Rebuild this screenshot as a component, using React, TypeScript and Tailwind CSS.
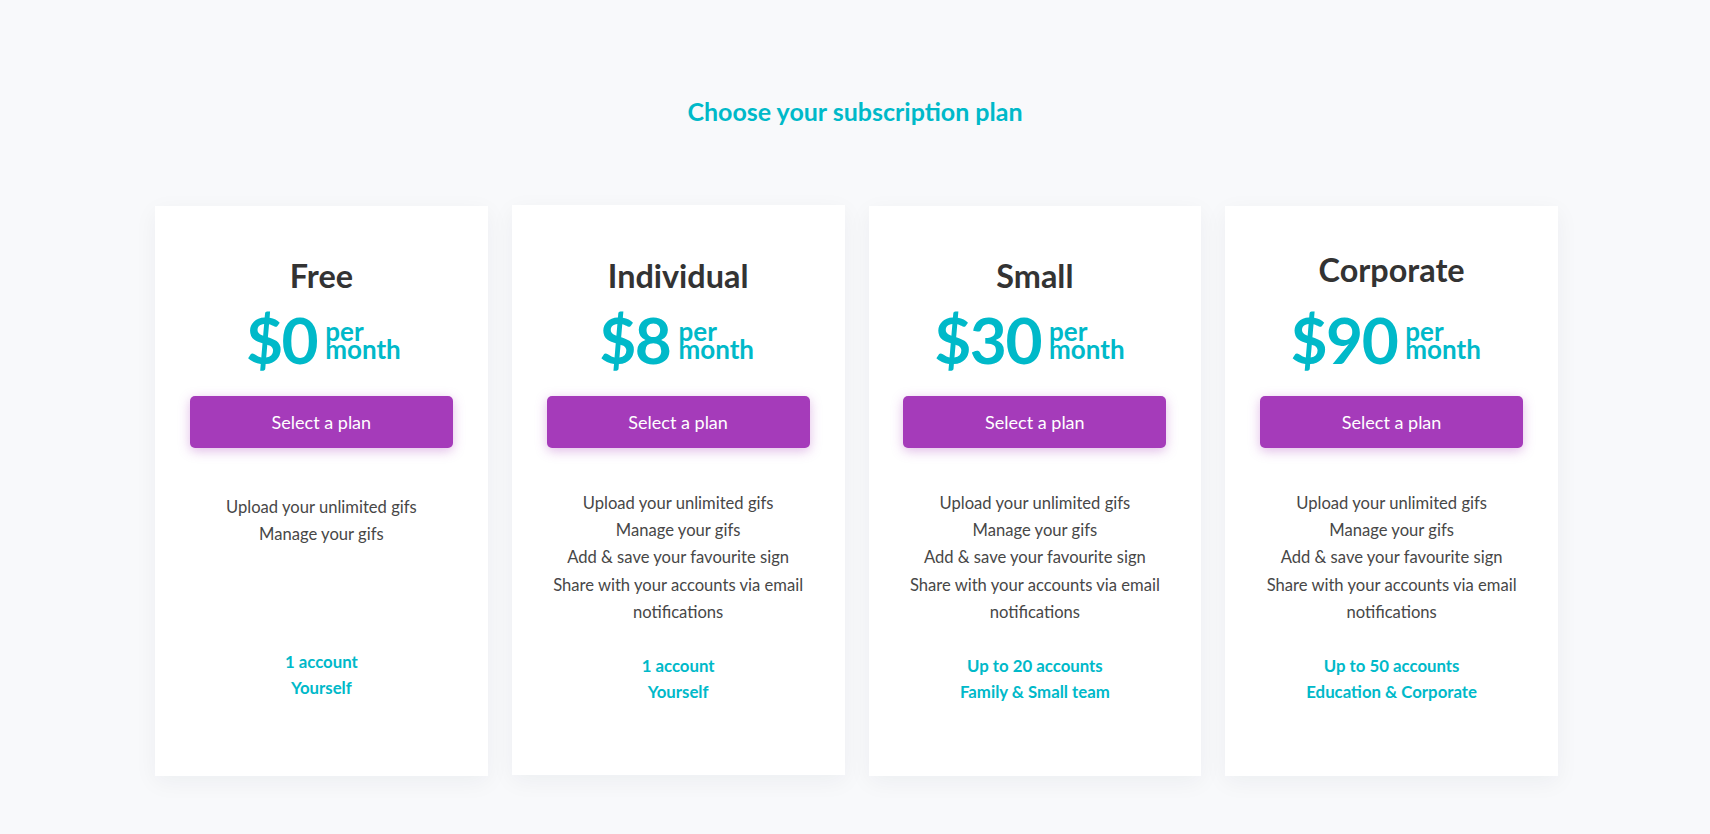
import React from "react";

type Plan = {
  name: string;
  price: string;
  features: string[];
  accounts: [string, string];
  titleMb: string;
  titlePt: string;
  featPt: string;
  accMt: string;
  cardShift: string;
  priceShift: string;
};

const plans: Plan[] = [
  {
    name: "Free",
    price: "$0",
    features: ["Upload your unlimited gifs", "Manage your gifs"],
    accounts: ["1 account", "Yourself"],
    titlePt: "pt-[52px]",
    titleMb: "mb-[13px]",
    featPt: "pt-[46px]",
    accMt: "mt-[19px]",
    cardShift: "mt-0",
    priceShift: "pl-[4px]",
  },
  {
    name: "Individual",
    price: "$8",
    features: [
      "Upload your unlimited gifs",
      "Manage your gifs",
      "Add & save your favourite sign",
      "Share with your accounts via email notifications",
    ],
    accounts: ["1 account", "Yourself"],
    titlePt: "pt-[53px]",
    titleMb: "mb-[13px]",
    featPt: "pt-[42px]",
    accMt: "mt-[27px]",
    cardShift: "-mt-px",
    priceShift: "pr-[3px]",
  },
  {
    name: "Small",
    price: "$30",
    features: [
      "Upload your unlimited gifs",
      "Manage your gifs",
      "Add & save your favourite sign",
      "Share with your accounts via email notifications",
    ],
    accounts: ["Up to 20 accounts", "Family & Small team"],
    titlePt: "pt-[52px]",
    titleMb: "mb-[13px]",
    featPt: "pt-[42px]",
    accMt: "mt-[27px]",
    cardShift: "mt-0",
    priceShift: "pr-[11px]",
  },
  {
    name: "Corporate",
    price: "$90",
    features: [
      "Upload your unlimited gifs",
      "Manage your gifs",
      "Add & save your favourite sign",
      "Share with your accounts via email notifications",
    ],
    accounts: ["Up to 50 accounts", "Education & Corporate"],
    titlePt: "pt-[46px]",
    titleMb: "mb-[19px]",
    featPt: "pt-[42px]",
    accMt: "mt-[27px]",
    cardShift: "mt-0",
    priceShift: "pr-[12px]",
  },
];

function Card({ p }: { p: Plan }) {
  return (
    <div
      className={`flex h-[570px] w-[332.75px] flex-col items-center bg-white shadow-[0_6px_22px_rgba(20,30,60,0.05)] ${p.titlePt} ${p.cardShift}`}
    >
      <h2 className={`text-[32.4px] font-bold leading-[36px] text-[#333333] ${p.titleMb}`}>
        {p.name}
      </h2>
      <div className={`mt-[1px] flex items-end text-[#00b9c9] ${p.priceShift}`}>
        <span className="text-[64px] font-bold leading-[64px] tracking-[-1.5px]">{p.price}</span>
        <span className="mb-[14px] ml-[8px] flex flex-col text-[26px] font-bold leading-[18px]">
          <span>per</span>
          <span>month</span>
        </span>
      </div>
      <button className="mt-[24px] h-[52px] w-[263px] rounded-[5px] bg-[#a53bba] text-[18px] text-white shadow-[0_3px_12px_rgba(165,59,186,0.35)]">
        Select a plan
      </button>
      <div className={`flex flex-col items-center ${p.featPt}`}>
        <div className="h-[136px] w-[270px] text-center text-[16.6px] leading-[27.2px] text-[#474747]">
          {p.features.map((f) => (
            <p key={f}>{f}</p>
          ))}
        </div>
      </div>
      <div className={`flex flex-col items-center text-[16.8px] font-bold leading-[26px] text-[#00b9c9] ${p.accMt}`}>
        <span>{p.accounts[0]}</span>
        <span>{p.accounts[1]}</span>
      </div>
    </div>
  );
}

export default function App() {
  return (
    <div
      className="min-h-screen w-full bg-[#f8f9fb]"
      style={{ fontFamily: "Lato, 'Open Sans', sans-serif" }}
    >
      <h1 className="pt-[96px] text-center text-[25px] font-bold leading-[30px] text-[#00b9c9]">
        Choose your subscription plan
      </h1>
      <div className="mt-[80px] flex items-start justify-center gap-[24px] pl-[3px]">
        {plans.map((p) => (
          <Card key={p.name} p={p} />
        ))}
      </div>
    </div>
  );
}
